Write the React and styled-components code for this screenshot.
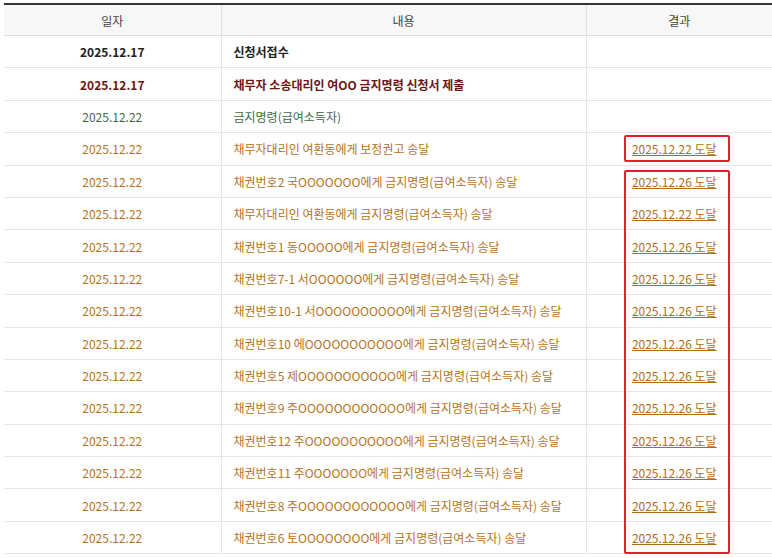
import React from "react";
import styled, { createGlobalStyle } from "styled-components";

const Global = createGlobalStyle`
  body { margin: 0; background: #fff; font-family: "Noto Sans CJK KR", "Noto Sans", sans-serif; }
`;
const Page = styled.div`padding: 3px 0 0 4px;`;
const Wrap = styled.div`position: relative; width: 768px;`;
const Table = styled.table`
  width: 100%; border-collapse: collapse; border-top: 2px solid #333; font-size: 12px; table-layout: fixed;
`;
const Th = styled.th`
  height: 30px; padding: 0; background: #f7f7f7; color: #444; font-weight: 400; border-bottom: 1px solid #ddd;
  border-left: ${p => (p.$first ? "none" : "1px solid #e2e2e2")};
`;
const Td = styled.td`
  height: 31.4px; padding: 0 ${p => (p.$pr ? "22px" : "12px")} 0 12px; border-bottom: 1px solid #e5e5e5; color: ${p => p.$c};
  text-align: ${p => p.$align || "left"}; font-weight: ${p => (p.$bold ? 700 : 400)};
  border-left: ${p => (p.$first ? "none" : "1px solid #e5e5e5")};
`;
const Link = styled.a`color: #b06d12; text-decoration: underline;`;
const RedBox = styled.div`
  position: absolute; left: 620px; width: 106px; border: 2.5px solid #e0202a; border-radius: 2px; box-sizing: border-box;
`;

const O = "#b5731c";
const rows = [
  ["2025.12.17", "신청서접수", "", "#222", true],
  ["2025.12.17", "채무자 소송대리인 여OO 금지명령 신청서 제출", "", "#6b1515", true],
  ["2025.12.22", "금지명령(급여소득자)", "", "#3f6a45"],
  ["2025.12.22", "채무자대리인 여환동에게 보정권고 송달", "2025.12.22 도달", O],
  ["2025.12.22", "채권번호2 국OOOOOOO에게 금지명령(급여소득자) 송달", "2025.12.26 도달", O],
  ["2025.12.22", "채무자대리인 여환동에게 금지명령(급여소득자) 송달", "2025.12.22 도달", O],
  ["2025.12.22", "채권번호1 동OOOOO에게 금지명령(급여소득자) 송달", "2025.12.26 도달", O],
  ["2025.12.22", "채권번호7-1 서OOOOOO에게 금지명령(급여소득자) 송달", "2025.12.26 도달", O],
  ["2025.12.22", "채권번호10-1 서OOOOOOOOOO에게 금지명령(급여소득자) 송달", "2025.12.26 도달", O],
  ["2025.12.22", "채권번호10 에OOOOOOOOOOO에게 금지명령(급여소득자) 송달", "2025.12.26 도달", O],
  ["2025.12.22", "채권번호5 제OOOOOOOOOOO에게 금지명령(급여소득자) 송달", "2025.12.26 도달", O],
  ["2025.12.22", "채권번호9 주OOOOOOOOOOOO에게 금지명령(급여소득자) 송달", "2025.12.26 도달", O],
  ["2025.12.22", "채권번호12 주OOOOOOOOOOO에게 금지명령(급여소득자) 송달", "2025.12.26 도달", O],
  ["2025.12.22", "채권번호11 주OOOOOOO에게 금지명령(급여소득자) 송달", "2025.12.26 도달", O],
  ["2025.12.22", "채권번호8 주OOOOOOOOOOOO에게 금지명령(급여소득자) 송달", "2025.12.26 도달", O],
  ["2025.12.22", "채권번호6 토OOOOOOOO에게 금지명령(급여소득자) 송달", "2025.12.26 도달", O],
];

export default function App() {
  return (
    <Page>
      <Global />
      <Wrap>
        <Table>
          <colgroup>
            <col style={{ width: 217 }} />
            <col style={{ width: 365 }} />
            <col />
          </colgroup>
          <thead>
            <tr><Th $first>일자</Th><Th>내용</Th><Th>결과</Th></tr>
          </thead>
          <tbody>
            {rows.map((r, i) => (
              <tr key={i}>
                <Td $first $align="center" $c={r[3]} $bold={r[4]}>{r[0]}</Td>
                <Td $c={r[3]} $bold={r[4]}>{r[1]}</Td>
                <Td $align="center" $pr $c={r[3]}>{r[2] && <Link>{r[2]}</Link>}</Td>
              </tr>
            ))}
          </tbody>
        </Table>
        <RedBox style={{ top: 132, height: 27 }} />
        <RedBox style={{ top: 167, height: 384 }} />
      </Wrap>
    </Page>
  );
}
